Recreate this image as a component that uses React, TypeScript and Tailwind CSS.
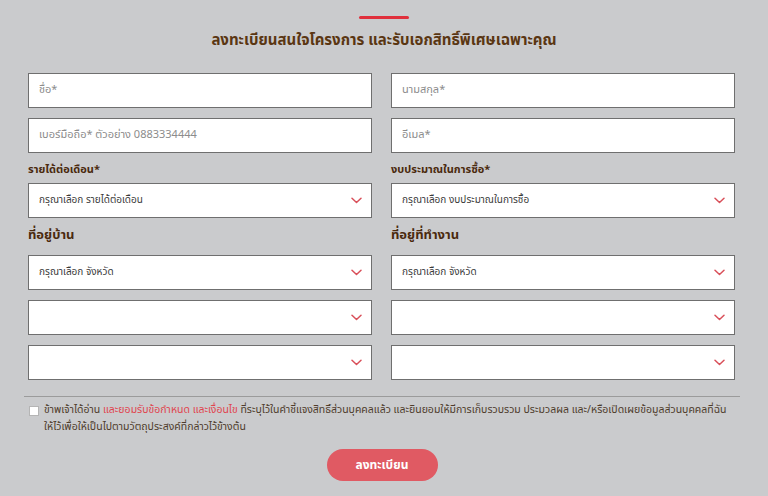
import React from "react";

const FONT = { fontFamily: '"Noto Sans Thai", "Noto Sans", "Liberation Sans", sans-serif' };

function Chevron() {
  return (
    <svg width="11" height="7" viewBox="0 0 11 7" className="shrink-0">
      <path d="M1 1.2 L5.5 5.5 L10 1.2" fill="none" stroke="#d9505a" strokeWidth="1.5" strokeLinecap="round" strokeLinejoin="round" />
    </svg>
  );
}

function Input({ ph }: { ph: string }) {
  return (
    <div className="h-[35px] bg-white border border-[#6f6f6f] flex items-center pl-[10px] text-[11px] text-[#8c8c8c]">
      {ph}
    </div>
  );
}

function Select({ text, mt = "" }: { text?: string; mt?: string }) {
  return (
    <div className={`h-[35px] bg-white border border-[#6f6f6f] flex items-center justify-between pl-[10px] pr-[9px] text-[10px] text-[#3a3a3a] ${mt}`}>
      <span>{text ?? ""}</span>
      <Chevron />
    </div>
  );
}

function Column({ a, b, l1, s1, l2 }: { a: string; b: string; l1: string; s1: string; l2: string }) {
  return (
    <div className="flex flex-col">
      <Input ph={a} />
      <div className="mt-[10px]">
        <Input ph={b} />
      </div>
      <div className="mt-[10px] mb-[5px] h-[15px] flex items-center text-[11px] font-bold text-[#4a2a0e]">{l1}</div>
      <Select text={s1} />
      <div className="mt-[10px] mb-[11px] h-[16px] flex items-center text-[13px] font-bold text-[#4a2a0e]">{l2}</div>
      <Select text="กรุณาเลือก จังหวัด" />
      <Select mt="mt-[10px]" />
      <Select mt="mt-[10px]" />
    </div>
  );
}

export default function App() {
  return (
    <div className="w-[768px] h-[496px] bg-[#cacbcd] overflow-hidden" style={FONT}>
      <div className="flex justify-center pt-[16px]">
        <div className="w-[50px] h-[3px] rounded-full bg-[#e0303c]" />
      </div>
      <div className="mt-[12px] text-center text-[15px] font-bold text-[#5a3612] leading-[20px]">
        ลงทะเบียนสนใจโครงการ และรับเอกสิทธิ์พิเศษเฉพาะคุณ
      </div>
      <div className="mx-[24px] w-[716px] mt-[22px]">
        <div className="pl-[4px] pr-[5px] grid grid-cols-2 gap-x-[19px]">
          <Column
            a="ชื่อ*"
            b="เบอร์มือถือ* ตัวอย่าง 0883334444"
            l1="รายได้ต่อเดือน*"
            s1="กรุณาเลือก รายได้ต่อเดือน"
            l2="ที่อยู่บ้าน"
          />
          <Column
            a="นามสกุล*"
            b="อีเมล*"
            l1="งบประมาณในการซื้อ*"
            s1="กรุณาเลือก งบประมาณในการซื้อ"
            l2="ที่อยู่ที่ทำงาน"
          />
        </div>
        <div className="mt-[16px] h-[1px] bg-[#9b9b9b]" />
        <div className="mt-[5px] flex items-start pl-[5px] pr-[12px]">
          <div className="mt-[4px] w-[10px] h-[10px] bg-white border border-[#b5b5b5] shrink-0" />
          <p className="ml-[5px] text-[10.5px] leading-[17px] text-[#4e3c2c]">
            ข้าพเจ้าได้อ่าน <span className="text-[#e0454f]">และยอมรับข้อกำหนด และเงื่อนไข</span> ที่ระบุไว้ในคำชี้แจงสิทธิ์ส่วนบุคคลแล้ว และยินยอมให้มีการเก็บรวบรวม ประมวลผล และ/หรือเปิดเผยข้อมูลส่วนบุคคลที่ฉัน ให้ไว้เพื่อให้เป็นไปตามวัตถุประสงค์ที่กล่าวไว้ข้างต้น
          </p>
        </div>
        <div className="mt-[13px] flex justify-center">
          <div className="w-[111px] h-[32px] rounded-full bg-[#e05a63] flex items-center justify-center text-white text-[12px] font-bold">
            ลงทะเบียน
          </div>
        </div>
      </div>
    </div>
  );
}
